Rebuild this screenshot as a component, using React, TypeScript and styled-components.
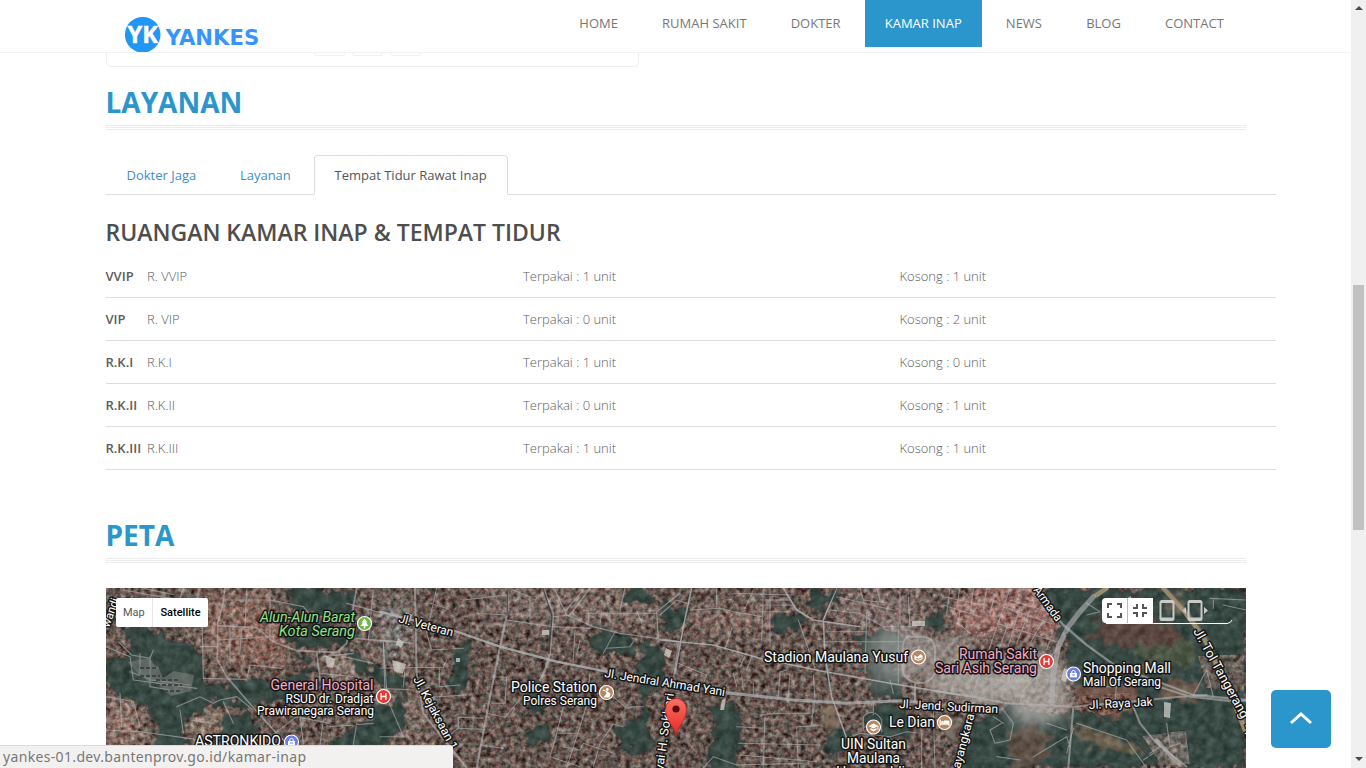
import React from "react";
import styled, { createGlobalStyle } from "styled-components";

const BLUE = "#2b96cc";

const Global = createGlobalStyle`
  * { box-sizing: border-box; }
  body { margin: 0; background: #fff; overflow: hidden; font-family: "Open Sans", sans-serif; font-size: 13px; color: #555; }
`;

const Window = styled.div`
  display: flex;
  height: 768px;
  position: relative;
  overflow: hidden;
`;
const Page = styled.div`
  flex: 1;
  display: flex;
  flex-direction: column;
  overflow: hidden;
`;
const Header = styled.header`
  height: 53px;
  flex: none;
  display: flex;
  align-items: flex-start;
  border-bottom: 1px solid #f2f2f2;
  padding-left: 120px;
`;
const Logo = styled.svg`
  display: block;
  width: 439.3px;
  height: 52px;
`;
const Nav = styled.nav`
  display: flex;
  gap: 4.15px;
`;
const NavItem = styled.a<{ $active?: boolean }>`
  height: 47px;
  padding: 0 20px;
  line-height: 47px;
  white-space: nowrap;
  color: ${(p) => (p.$active ? "#fff" : "#777")};
  background: ${(p) => (p.$active ? BLUE : "transparent")};
`;
const Content = styled.main`
  padding-left: 105.5px;
  flex: 1;
`;
const Card = styled.div`
  width: 533px;
  height: 14px;
  border: 1px solid #eee;
  border-top: 0;
  border-radius: 0 0 5px 5px;
  display: flex;
  gap: 7px;
  padding-left: 207px;
`;
const CardStub = styled.span`
  width: 31px;
  height: 3px;
  border: 1px solid #f1f1f1;
  border-top: 0;
  border-radius: 0 0 4px 4px;
`;
const Title = styled.h2<{ $top: number }>`
  margin: ${(p) => p.$top}px 0 0;
  width: 1140px;
  height: 43px;
  line-height: 40px;
  font-size: 28px;
  font-weight: 700;
  color: ${BLUE};
`;
const Rule = styled.div`
  width: 1140px;
  height: 5px;
  border-top: 1px solid #ececec;
  border-bottom: 1px solid #ececec;
  padding-top: 1px;
  &::after { content: ""; display: block; height: 1px; background: #ececec; }
`;
const Tabs = styled.div`
  display: flex;
  gap: 1.7px;
  width: 1170px;
  height: 40px;
  margin-top: 25px;
  border-bottom: 1px solid #ddd;
`;
const Tab = styled.a<{ $active?: boolean }>`
  height: 40px;
  padding: 0 20px;
  line-height: 39px;
  color: ${(p) => (p.$active ? "#555" : "#428bca")};
  border: 1px solid ${(p) => (p.$active ? "#ddd" : "transparent")};
  border-bottom-color: ${(p) => (p.$active ? "#fff" : "transparent")};
  border-radius: 4px 4px 0 0;
`;
const SubTitle = styled.h3`
  margin: 20px 0 5px;
  height: 35px;
  line-height: 35px;
  font-size: 23px;
  font-weight: 600;
  color: #4e4e4e;
`;
const Row = styled.div`
  display: grid;
  grid-template-columns: 41.5px 376px 376.5px 1fr;
  width: 1170px;
  height: 43px;
  line-height: 42px;
  border-bottom: 1px solid #ddd;
  font-weight: 300;
  color: #5c5c5c;
  white-space: nowrap;
`;
const RoomCode = styled.span`
  font-weight: 600;
`;
const MapFrame = styled.div`
  position: relative;
  width: 1140px;
  height: 180px;
  margin-top: 25px;
  overflow: hidden;
`;
const MapSvg = styled.svg`
  display: block;
  font-family: Roboto, sans-serif;
`;
const MapTypes = styled.div`
  position: absolute;
  left: 10px;
  top: 10px;
  display: flex;
  height: 29px;
  line-height: 29px;
  background: #fff;
  border-radius: 2px;
  font-family: Roboto, sans-serif;
  font-size: 11px;
  color: #565656;
`;
const MapType = styled.span<{ $active?: boolean }>`
  padding: 0 7.4px;
  font-weight: ${(p) => (p.$active ? 500 : 400)};
  color: ${(p) => (p.$active ? "#000" : "#565656")};
  border-left: ${(p) => (p.$active ? "1px solid #e6e6e6" : "0")};
`;
const TopButton = styled.button`
  position: absolute;
  left: 1271px;
  top: 690px;
  width: 60px;
  height: 58px;
  border: 0;
  border-radius: 5px;
  padding: 0;
  background: ${BLUE};
  display: flex;
  align-items: center;
  justify-content: center;
`;
const StatusBar = styled.div`
  position: absolute;
  left: 0;
  top: 745px;
  width: 453px;
  height: 23px;
  padding-left: 3px;
  line-height: 22px;
  background: #f2f1f0;
  border-top: 1px solid #dddcdb;
  border-top-right-radius: 3px;
  font-family: "Noto Sans", sans-serif;
  font-size: 14px;
  color: #777;
  letter-spacing: 0.34px;
`;
const Scrollbar = styled.div`
  width: 15px;
  background: #f0f0f0;
  display: flex;
  flex-direction: column;
  align-items: center;
  padding-top: 6px;
`;
const Arrow = styled.i<{ $down?: boolean }>`
  border: 4px solid transparent;
  border-top: ${(p) => (p.$down ? "4px solid #4a4a4a" : "0")};
  border-bottom: ${(p) => (p.$down ? "0" : "4px solid #4a4a4a")};
`;
const Thumb = styled.div`
  width: 11px;
  height: 245px;
  margin: 275px 0 227px;
  background: #c1c1c1;
`;

const navItems = ["HOME", "RUMAH SAKIT", "DOKTER", "KAMAR INAP", "NEWS", "BLOG", "CONTACT"];
const rooms = [
  ["VVIP", "R. VVIP", 1, 1],
  ["VIP", "R. VIP", 0, 2],
  ["R.K.I", "R.K.I", 1, 0],
  ["R.K.II", "R.K.II", 0, 1],
  ["R.K.III", "R.K.III", 1, 1],
];

type LabelProps = { x: number; y: number; w: number; size?: number; fill?: string; end?: boolean; italic?: boolean; rotate?: number; children: string };
const Label = ({ x, y, w, size = 14, fill = "#fff", end, italic, rotate = 0, children }: LabelProps) => (
  <text
    transform={`translate(${x} ${y}) rotate(${rotate})`}
    fontSize={size}
    fill={fill}
    textLength={w}
    lengthAdjust="spacingAndGlyphs"
    textAnchor={end ? "end" : "start"}
    fontStyle={italic ? "italic" : "normal"}
    stroke="#151515"
    strokeWidth={3}
    strokeLinejoin="round"
    paintOrder="stroke"
  >
    {children}
  </text>
);

const Poi = ({ x, y, fill, children }: { x: number; y: number; fill: string; children: React.ReactNode }) => (
  <g transform={`translate(${x} ${y})`}>
    <circle r={7} fill={fill} stroke="#fff" strokeWidth={1.2} />
    {children}
  </g>
);
const Bag = () => (
  <g>
    <path d="M-3.5-1h7v4.3h-7z" fill="#fff" />
    <path d="M-1.7-1v-1.2q0-1.3 1.7-1.3t1.7 1.3V-1M-1.5 1h3" fill="none" stroke="#fff" />
    <path d="M-1.5 1h3" stroke="#6b7fe3" />
  </g>
);

const greens = [
  "M170 0H250V18L226 34 200 22 184 14Z",
  "M14 38L46 37 58 50 96 58 97 88 118 98 150 90 175 92 196 80 204 96 168 116 142 118 118 112 96 122 82 132 74 162 54 164 50 130 28 112 0 104V70L24 62Z",
  "M0 70L30 72 35 94 42 110 22 112 0 104Z",
  "M180 55L240 60 245 46 214 34 180 44 184 66 204 76 195 88 212 82Z",
  "M242 55L268 80 300 90V112L270 90 244 74Z",
  "M270 120L300 110V138L240 180H214L224 156Z",
  "M54 148L82 146 82 180 44 180Z",
  "M120 128L150 124 151 150 136 165 114 148Z",
  "M350 54L364 56 365 82 360 98 346 104 344 82Z",
  "M422 88L440 104 440 128 420 122Z",
  "M425 142L444 132 440 154 422 154Z",
  "M484 40L520 44 534 58 524 70 490 66 480 52Z",
  "M518 0H548V14L532 20 514 8Z",
  "M536 54H556V90L544 114 546 162 510 166 514 136 536 126 530 92Z",
  "M556 10L580 20 578 38 556 46Z",
  "M664 28L698 24 694 42 668 46Z",
  "M704 0H732L724 20 704 28Z",
  "M602 114H634V180H600L608 152Z",
  "M716 144L744 140 750 158 722 168Z",
  "M762 118L800 120 804 152 762 146Z",
  "M818 30L844 14 840 42 824 46Z",
  "M740 44L796 44 794 110 768 108 762 74Z",
  "M850 0H934L958 40 952 60 950 6 940 0Z",
  "M934 0H1140V180H850L858 134 890 122 960 126 1002 120 960 92 960 50Z",
];
const fields: [string, string][] = [
  ["M976 50L1010 20 1058 34 1094 60 1080 70 1020 58Z", "#5b4741"],
  ["M1032 54H1088V72L1054 84 1036 74Z", "#4b5744"],
  ["M964 134L1004 148 1042 162 1024 168 974 156Z", "#6b6050"],
  ["M1058 88L1094 94 1092 116 1058 108Z", "#6d5c50"],
  ["M1060 14L1080 10 1076 30 1062 26Z", "#6a665c"],
  ["M714 122L726 120 736 142 726 148Z", "#84705f"],
  ["M842 134L858 130 850 154 840 156Z", "#746a60"],
  ["M1054 154H1078V180H1052Z", "#6d6258"],
  ["M974 108L1024 106 1028 126 1000 130 986 124Z", "#6c5147"],
  ["M902 148L930 132 948 156 930 178 908 178Z", "#5c5047"],
  ["M1000 90L1032 96 1030 110 970 110 964 98Z", "#6e5348"],
];

const clusters: [number, number, number, number, string][] = [
  [96, 4, 70, 70, "#84695e"], [136, 28, 44, 50, "#85655a"], [0, 110, 34, 50, "#8b7268"],
  [84, 120, 40, 30, "#8b786c"], [224, 66, 36, 26, "#8c7d73"], [262, 104, 60, 50, "#7c6c63"],
  [380, 6, 100, 26, "#7c6c66"], [850, 10, 100, 36, "#96706a"], [590, 18, 80, 26, "#7f6962"],
  [732, 4, 90, 36, "#7a6965"], [274, 10, 26, 60, "#7b7772"], [460, 4, 90, 30, "#7a6a64"],
];

const SatelliteMap = () => (
  <MapSvg width="1140" height="180" viewBox="0 0 1140 180">
    <defs>
      <filter id="urban" x="0" y="0" width="100%" height="100%" colorInterpolationFilters="sRGB">
        <feTurbulence type="fractalNoise" baseFrequency="0.2" numOctaves="3" seed="4" result="n" />
        <feColorMatrix in="n" values="1.3 .5 0 0 -.4  1 .9 0 0 -.45  .95 .8 .15 0 -.45  0 0 0 0 1" result="m" />
        <feComposite in="SourceGraphic" in2="m" operator="arithmetic" k2="1" k3=".55" k4="-.275" result="c" />
        <feComposite in="c" in2="SourceGraphic" operator="in" />
      </filter>
      <filter id="leaf" x="-5%" y="-5%" width="110%" height="110%" colorInterpolationFilters="sRGB">
        <feTurbulence type="fractalNoise" baseFrequency="0.08" numOctaves="3" seed="9" result="w" />
        <feDisplacementMap in="SourceGraphic" in2="w" scale="24" xChannelSelector="R" yChannelSelector="G" result="d" />
        <feGaussianBlur in="d" stdDeviation="1" result="s" />
        <feTurbulence type="fractalNoise" baseFrequency="0.12" numOctaves="4" seed="2" result="n" />
        <feColorMatrix in="n" values=".8 .4 0 0 -.1  .8 .4 0 0 -.1  .8 .4 0 0 -.1  0 0 0 0 1" result="m" />
        <feComposite in="s" in2="m" operator="arithmetic" k2="1" k3=".26" k4="-.13" result="c" />
        <feComposite in="c" in2="s" operator="in" />
      </filter>
      <filter id="cloud" x="-30%" y="-30%" width="160%" height="160%">
        <feTurbulence type="fractalNoise" baseFrequency="0.03" numOctaves="3" seed="6" result="w" />
        <feDisplacementMap in="SourceGraphic" in2="w" scale="30" xChannelSelector="R" yChannelSelector="G" />
        <feGaussianBlur stdDeviation="7" />
      </filter>
      <filter id="soft"><feGaussianBlur stdDeviation="8" /></filter>
      <linearGradient id="pin" x1="0" y1="0" x2="0" y2="1">
        <stop offset="0" stopColor="#fb7064" />
        <stop offset="1" stopColor="#e5261f" />
      </linearGradient>
    </defs>

    <g filter="url(#urban)">
      <path d="M0 0H1140V180H0Z" fill="#655650" />
      <g filter="url(#soft)">
        {clusters.map(([x, y, w, h, c], i) => <rect key={i} x={x} y={y} width={w} height={h} fill={c} />)}
      </g>
    </g>
    <g filter="url(#leaf)">
      {greens.map((d, i) => <path key={i} d={d} fill="#384843" />)}
      {fields.map(([d, c], i) => <path key={i} d={d} fill={c} />)}
    </g>
    <g filter="url(#urban)" opacity=".8">
      <path d="M848 14L872 0H930L952 28 944 52 914 40 870 46 848 36Z" fill="#96716a" />
      <path d="M972 108L1024 104 1024 122 996 128 972 120Z" fill="#7b5a4e" />
      <path d="M1092 68L1138 66V104L1100 100Z" fill="#6f625b" />
      <path d="M1036 148L1080 142 1084 176 1056 178Z" fill="#77706a" />
    </g>
    <g filter="url(#cloud)" fill="#c5c1bd">
      <ellipse cx="872" cy="92" rx="48" ry="24" opacity=".65" />
      <ellipse cx="930" cy="98" rx="32" ry="34" opacity=".6" />
      <ellipse cx="926" cy="132" rx="24" ry="12" opacity=".4" />
      <ellipse cx="796" cy="68" rx="34" ry="26" opacity=".5" />
      <ellipse cx="842" cy="56" rx="24" ry="10" opacity=".5" />
      <ellipse cx="774" cy="92" rx="22" ry="9" opacity=".25" />
    </g>

    <g fill="none" strokeLinejoin="round" strokeLinecap="round" stroke="#b4b6b8" strokeOpacity=".6">
      {/* western quarter */}
      <g transform="translate(-16 -8) scale(.33333)" strokeWidth="3.4">
        <path strokeWidth="5" d="M405 24L398 75 383 130 382 240 410 290 470 360 560 460 600 500M384 137L500 143 550 185 620 212 740 217 770 190 800 24M800 175L900 185M680 215L690 300" />
        <path d="M100 30L240 55M165 26L250 44M540 24V180M405 60L540 60M280 24L270 54M335 80L340 295 470 298 480 255 575 265M332 200H380M420 145V250M455 145L450 210M385 180L540 170M470 30L465 140M540 60L640 80 700 150M770 70L880 100M850 30L835 180M880 190L890 330M650 120L740 100M760 230L850 250M700 230L790 220M690 280L790 290" />
        <path d="M48 200L120 230 130 300 320 325M85 185L125 225 180 235 190 210M120 275L185 300 300 315M150 220V280M180 230V320L240 330M48 450L150 455 318 478M50 350L130 365 150 440M90 340L95 440M260 380L330 350 370 370M270 390L280 460M370 370L390 360 440 350 490 390M400 365L430 430M555 460L620 410 720 430M630 410L640 490M700 420L690 495M800 430L790 495M720 440L850 430M300 420L370 430" />
      </g>
      {/* station quarter */}
      <g transform="translate(274 -8) scale(.33333)" strokeWidth="3.2">
        <path strokeWidth="7" strokeOpacity=".8" d="M0 95L230 155 360 200 530 245 680 275" />
        <path strokeWidth="6" d="M385 24L382 100 360 200 330 350 290 564M490 24L520 100 510 220 495 270 480 300M105 24L110 280 130 400 260 564" />
        <path strokeWidth="4" d="M0 180L100 190M380 120L515 140M525 30L560 105 640 140 720 160 900 185M720 90L735 24M570 105L630 24M555 95L610 30M520 140L630 145M835 175L830 95 900 40M895 190L880 300" />
        <path d="M170 24L140 160 155 210 250 205M150 70L200 85M250 60L380 45M290 100L380 105M400 30L450 50 450 130M520 110L570 105M620 100H830M625 100V125M665 95L660 135M690 95V135M770 90L785 130M705 155L670 220M585 150L580 240M590 225L600 180M680 205L750 200 760 185M630 280L625 330M10 185L15 340 70 470 0 470M0 265L190 262 200 240M75 265L70 320M178 262V320L240 315M0 325L100 330M150 352L260 345M335 290L380 292 375 370 335 370M320 400L375 412 430 345M235 412L310 415M235 412V445L305 448M210 465L240 440M550 380L525 480 510 530 600 560M620 375L600 440 560 564M530 460H600M550 500L600 510 610 490 700 520M730 440L700 432 660 490 640 560M700 350L740 385 765 380M735 380V410M790 380H750M300 495L370 505" />
      </g>
      {/* stadium quarter */}
      <g transform="translate(554 -8) scale(.33333)" strokeWidth="3.2">
        <path strokeWidth="9" strokeOpacity=".7" d="M200 338L400 360 560 370 720 362 800 370" />
        <path strokeWidth="4.5" strokeOpacity=".8" d="M530 24L490 120 495 230 515 350 560 475M0 180L160 195 300 235 480 272 690 310 900 345M95 24L70 140 45 280M370 24L410 90 460 120 600 140" />
        <path strokeWidth="6" d="M745 170H795Q825 180 825 210V280Q810 310 775 310Q730 300 728 270V200Q728 180 745 170M765 310V365" />
        <path d="M90 90L180 85 220 95 310 110M0 105L50 60 80 70M170 24V80M255 85L280 30M220 40L400 45M300 60H390M300 75H400M300 95H390M310 24L305 180M330 24V200M215 145L195 210M415 120L465 265M490 185H725M500 155L620 155M510 90L600 100 670 140H760M620 100L615 280M720 24V130M745 50L750 140M600 24L610 60 690 70M530 50L700 90M650 24L660 60M715 130V310M55 250L140 285 130 310M240 260L255 230M260 270L275 230M360 275L355 350M360 275L380 270M390 280L385 350M220 280L230 320M460 285L465 360 460 400 320 400M245 285L250 330M280 310V340M315 405L310 560M235 490L480 495M240 525L470 545M320 445L230 440M460 360L455 440 410 440 415 564M415 440L480 435M560 475L600 460 690 470 740 455 785 460V564M640 370V405M610 450V410Q640 380 665 420V455M300 405L360 400M160 530L230 555 430 550M160 530L130 564M820 390L825 564M690 300L700 340" />
      </g>
      {/* toll road quarter */}
      <g transform="translate(834 -8) scale(.33333)" strokeWidth="3.3">
        <path strokeWidth="14" stroke="#b5a27e" strokeOpacity=".75" d="M470 45L500 24M670 24L730 90 790 170 870 340 915 450" />
        <path strokeWidth="5" stroke="#756a55" d="M680 24L740 90 800 170 875 330 918 430" />
        <path strokeWidth="16" strokeOpacity=".6" d="M460 50L420 95 385 140 355 200 340 280 335 370" />
        <path strokeWidth="7" d="M280 30L370 135 440 195 530 260 640 300 760 345 918 360" />
        <path strokeWidth="6" d="M640 315L750 350 860 362 918 362M0 335L100 350 200 370 400 380 520 370 720 350 800 345M400 380L385 564M580 380L600 430 650 490 740 560" />
        <path strokeWidth="12" d="M650 480L690 525 720 555" />
        <path d="M210 24L140 230 95 350M210 60L340 100 360 140M190 80L330 130M170 130L350 185M205 130L180 200M240 80L190 250M270 90L230 190M310 120L270 190M340 150L320 210M60 90L55 130 90 160M10 50L130 75M10 75L120 110M30 24L20 100M60 24L50 80M100 24L90 110M140 24L130 90M165 40L150 100M355 200L290 290 250 330 240 370M210 240L205 310 160 340M190 390L220 430 210 480 165 490 150 450 185 430M190 430L160 410M320 430L380 450M350 400L300 380M280 530L380 470 390 500M170 530L240 540M410 430L560 480 620 564M400 445L380 520M680 430L690 500 720 490M630 520L660 500 650 480M440 105L480 95 440 70M810 55L918 60M820 60V85M850 75L918 90M530 300L525 370M440 320H540M760 345L800 270 820 350M610 540L640 520" />
      </g>
    </g>
    <g fill="none" stroke="#343b39" strokeOpacity=".75" strokeWidth="1.3">
      <path d="M437 0L446 28 443 66M402 0L401 28M960 46L984 62 1010 84M980 118L1020 144 1052 178M730 0L715 32" />
    </g>
    <g fill="#d2cfca">
      <path d="M219 67l10 4-2 9-6-1zM806 33h13v5h-13zM616 112l4-2-2 12h-4zM436 42h7v5h-7zM1018 12l7-4v4l-6 3zM1058 114l7 1-1 15-6-1zM958 80l5 2-3 12-5-2zM350 70h4v4h-4zM560 60l6 3-3 7-5-3zM300 24l6 3-4 12-5-2zM292 50l6 4-3 6-5-4zM286 72l14 4-3 10-9-3z" opacity=".75" />
    </g>
    <path d="M49 95l19-12 20 4-3 16-20 5zM35 84l17-6 6 14-16 2zM22 74l22-4 6 10-16 8z" fill="#8b8c87" opacity=".5" />
    <path d="M50 92h24M50 97h26M58 103h18M34 80h18M34 88h20" stroke="#3f4446" strokeWidth="2" strokeDasharray="4 2" />

    <Label x={3} y={40} w={30} size={12} rotate={-70}>wandi</Label>
    <Label x={249} y={34} w={95} fill="#8fe28a" italic end>Alun-Alun Barat</Label>
    <Label x={249} y={48} w={76} fill="#8fe28a" italic end>Kota Serang</Label>
    <Label x={267.5} y={102} w={103} fill="#f4a9c4" end>General Hospital</Label>
    <Label x={267.5} y={115} w={88} size={12} end>RSUD dr. Dradjat</Label>
    <Label x={268} y={127} w={117} size={12} end>Prawiranegara Serang</Label>
    <Label x={175} y={158} w={86} end>ASTRONKIDO</Label>
    <Label x={292} y={34} w={56} size={12} rotate={15}>Jl. Veteran</Label>
    <Label x={307} y={91} w={81} size={12} rotate={62}>Jl. Kejaksaan 1</Label>
    <Label x={491} y={104} w={86} end>Police Station</Label>
    <Label x={491} y={117} w={74} size={12} end>Polres Serang</Label>
    <Label x={498} y={89} w={122} size={12} rotate={9}>Jl. Jendral Ahmad Yani</Label>
    <Label x={557} y={183} w={78} size={12} rotate={-82}>yai H. Sokhari</Label>
    <Label x={802} y={74} w={144} end>Stadion Maulana Yusuf</Label>
    <Label x={931} y={71} w={78} fill="#f4a9c4" end>Rumah Sakit</Label>
    <Label x={931} y={85} w={102} fill="#f4a9c4" end>Sari Asih Serang</Label>
    <Label x={927} y={2} w={40} size={12} rotate={54}>Armada</Label>
    <Label x={977} y={85} w={88}>Shopping Mall</Label>
    <Label x={977} y={98} w={78} size={12}>Mall Of Serang</Label>
    <Label x={983} y={121} w={64} size={12} rotate={-3}>Jl. Raya Jak</Label>
    <Label x={793} y={120} w={99} size={12} rotate={3}>Jl. Jend. Sudirman</Label>
    <Label x={829} y={139} w={46} end>Le Dian</Label>
    <Label x={735} y={161} w={65}>UIN Sultan</Label>
    <Label x={741} y={175} w={53}>Maulana</Label>
    <Label x={730} y={189} w={77}>Hasanuddin</Label>
    <Label x={854} y={181} w={56} size={12} rotate={-75}>ayangkara</Label>
    <Label x={1087} y={43} w={101} size={13} rotate={61}>Jl. Tol Tangerang</Label>
    <Label x={1136} y={138} w={42} size={13} rotate={70}>- Merak</Label>

    <Poi x={258.5} y={35.5} fill="#6eb844"><path d="M0-5L-3-1h1.5L-4 2.5h3.2V5h1.6V2.5H4L1.5-1H3Z" fill="#fff" /></Poi>
    <Poi x={277.5} y={108.5} fill="#e53935"><path d="M-2.4-3.5v7M2.4-3.5v7M-2.4 0h4.8" stroke="#fff" strokeWidth="1.3" fill="none" /></Poi>
    <Poi x={185.5} y={154} fill="#6b7fe3"><Bag /></Poi>
    <Poi x={500.5} y={104.5} fill="#b58763"><g fill="#fff"><circle cx=".8" cy="-3" r="1.4" /><path d="M-3-3l4 2 3 2-1 4H-3L0 1-1-1-4-2Z" /></g></Poi>
    <Poi x={812.5} y={69} fill="#b58763"><path d="M-4.2-2L-1 0 2-3 4-1.5V2Q0 5-4 2.5Z" fill="#fff" /><path d="M-2.8 1.5Q0 3 3 1" stroke="#b58763" fill="none" /></Poi>
    <Poi x={940.5} y={73.5} fill="#e53935"><path d="M-2.4-3.5v7M2.4-3.5v7M-2.4 0h4.8" stroke="#fff" strokeWidth="1.3" fill="none" /></Poi>
    <Poi x={967.5} y={86} fill="#6b7fe3"><Bag /></Poi>
    <Poi x={767.5} y={139} fill="#b58763"><path d="M-5-1L0-3.6 5-1 0 1.6ZM-3 1L0 2.6 3 1V2.8L0 4.4-3 2.8Z" fill="#fff" /><path d="M4.4-1V3" stroke="#fff" strokeWidth=".9" /></Poi>
    <Poi x={838.5} y={134.5} fill="#b58763"><path d="M-4.4-3V3.2M-4 1.5H4.5M4.4 3.2V-.6H-.5V1" stroke="#fff" strokeWidth="1.3" fill="none" /><path d="M-.6-2H4.4V1H-.6Z" fill="#fff" /><circle cx="-2.3" cy="-.4" r="1.1" fill="#fff" /></Poi>

    <path d="M570 148C569 139 559.5 133 559.5 121A10.5 10.5 0 0 1 580.5 121C580.5 133 571 139 570 148Z" fill="url(#pin)" stroke="#b3201c" strokeWidth=".7" />
    <circle cx="570" cy="121" r="3.6" fill="#5a0c0a" />

    {/* frame-size controls */}
    <path d="M1000 10H1021V35H1000Q996 35 996 31V14Q996 10 1000 10ZM1022 10H1047V35H1022Z" fill="#fff" />
    <path d="M1000 35.500H1121Q1125 35 1126 32" fill="none" stroke="#fff" strokeWidth="1" />
    <g fill="none" stroke="#555" strokeWidth="2">
      <path d="M1002 20V16H1006M1011 16H1015V20M1015 25V29H1011M1006 29H1002V25" />
      <path d="M1027 20H1031V16M1037 16V20H1041M1041 25H1037V29M1031 29V25H1027" />
    </g>
    <g fill="none" stroke="#c9c9c6" strokeWidth="2">
      <path d="M1056 13h10q1.500 0 1.500 1.500v16q0 1.500-1.500 1.500h-10q-1.500 0-1.500-1.500v-16q0-1.500 1.500-1.500z" />
      <path d="M1084 13h10q1.500 0 1.500 1.500v16q0 1.500-1.500 1.500h-10q-1.500 0-1.500-1.500v-16q0-1.500 1.500-1.500z" />
      <path d="M1055 31H1067M1083 31H1095M1055 13.500H1067M1083 13.500H1095" strokeWidth="3" />
    </g>
    <path d="M1080 19V26L1076.500 22.500ZM1098 19V26L1102 22.500Z" fill="#c9c9c6" />
    <path d="M1021.500 10V35" stroke="#b9bbb8" />
  </MapSvg>
);

export default function App() {
  return (
    <Window>
      <Global />
      <Page>
        <Header>
          <Logo viewBox="0 0 439.3 52">
            <circle cx="22.700" cy="34.700" r="17.800" fill="#2196f3" />
            <text x="7.800" y="43.700" fontFamily="Open Sans" fontWeight="700" fontSize="23.500" textLength="30.500" lengthAdjust="spacingAndGlyphs" fill="#0c66b5" opacity=".4">YK</text>
            <text x="7.500" y="43" fontFamily="Open Sans" fontWeight="700" fontSize="23.500" textLength="30.500" lengthAdjust="spacingAndGlyphs" fill="#fff" stroke="#fff" strokeWidth=".5">YK</text>
            <text x="45.700" y="45" fontFamily="DejaVu Sans" fontWeight="700" fontSize="21" textLength="93.500" lengthAdjust="spacingAndGlyphs" fill="#3695fb">YANKES</text>
          </Logo>
          <Nav>
            {navItems.map((n) => <NavItem key={n} $active={n === "KAMAR INAP"}>{n}</NavItem>)}
          </Nav>
        </Header>
        <Content>
          <Card><CardStub /><CardStub /><CardStub /></Card>
          <Title $top={15}>LAYANAN</Title>
          <Rule />
          <Tabs>
            <Tab>Dokter Jaga</Tab>
            <Tab>Layanan</Tab>
            <Tab $active>Tempat Tidur Rawat Inap</Tab>
          </Tabs>
          <SubTitle>RUANGAN KAMAR INAP &amp; TEMPAT TIDUR</SubTitle>
          {rooms.map(([code, name, used, free]) => (
            <Row key={code}>
              <RoomCode>{code}</RoomCode>
              <span>{name}</span>
              <span>Terpakai : {used} unit</span>
              <span>Kosong : {free} unit</span>
            </Row>
          ))}
          <Title $top={45}>PETA</Title>
          <Rule />
          <MapFrame>
            <SatelliteMap />
            <MapTypes>
              <MapType>Map</MapType>
              <MapType $active>Satellite</MapType>
            </MapTypes>
          </MapFrame>
        </Content>
      </Page>
      <Scrollbar>
        <Arrow />
        <Thumb />
        <Arrow $down />
      </Scrollbar>
      <TopButton aria-label="Top">
        <svg width="24" height="16" viewBox="0 0 24 16"><path d="M2 12L12 3L22 12" fill="none" stroke="#fff" strokeWidth="3" /></svg>
      </TopButton>
      <StatusBar>yankes-01.dev.bantenprov.go.id/kamar-inap</StatusBar>
    </Window>
  );
}
